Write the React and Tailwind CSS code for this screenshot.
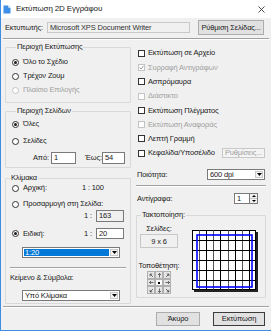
import React from 'react';

const arrowRot = [
  '-rotate-45', 'rotate-0', 'rotate-45',
  '-rotate-90', '', 'rotate-90',
  'rotate-[225deg]', 'rotate-180', 'rotate-[135deg]',
];

function Radio({ checked, disabled }) {
  return (
    <span className={`w-[7px] h-[7px] shrink-0 rounded-full border bg-white flex items-center justify-center ${disabled ? 'border-[#c4c4c4]' : 'border-[#333]'}`}>
      {checked && <span className="w-[3px] h-[3px] rounded-full bg-[#1a1a1a]" />}
    </span>
  );
}

function Check({ checked, disabled }) {
  return (
    <span className={`w-[7px] h-[7px] shrink-0 border bg-white flex items-center justify-center ${disabled ? 'border-[#c4c4c4]' : 'border-[#333]'}`}>
      {checked && (
        <svg width="5" height="5" viewBox="0 0 5 5">
          <path d="M0.5 2.5 L2 4 L4.5 0.8" fill="none" stroke={disabled ? '#9a9a9a' : '#000'} strokeWidth="1" />
        </svg>
      )}
    </span>
  );
}

function RadioRow({ label, checked, disabled, className = '' }) {
  return (
    <div className={`flex items-center gap-[4px] whitespace-nowrap ${className}`}>
      <Radio checked={checked} disabled={disabled} />
      <span className={disabled ? 'text-[#a0a0a0]' : ''}>{label}</span>
    </div>
  );
}

function CheckRow({ label, checked, disabled, children }) {
  return (
    <div className="h-[14.3px] flex items-center gap-[3px] pl-[2px] whitespace-nowrap">
      <Check checked={checked} disabled={disabled} />
      <span className={disabled ? 'text-[#a0a0a0]' : ''}>{label}</span>
      {children}
    </div>
  );
}

function Combo({ value, selected, className = '' }) {
  return (
    <div className={`h-[11px] border border-[#7a7a7a] bg-white flex ${className}`}>
      <div className={`flex-1 flex items-center ${selected ? 'bg-[#0078d7] text-white m-[1px] pl-[1px]' : 'pl-[2px]'}`}>{value}</div>
      <div className="w-[8px] my-[1px] mr-[1px] border border-[#c8c8c8] bg-[#f4f4f4] flex items-center justify-center">
        <svg width="5" height="3" viewBox="0 0 5 3"><path d="M0 0 H5 L2.5 3 Z" fill="#000" /></svg>
      </div>
    </div>
  );
}

function Field({ value, gray, className = '' }) {
  return (
    <div className={`border border-[#7a7a7a] flex items-center pl-[2px] whitespace-nowrap ${gray ? 'bg-[#f0f0f0]' : 'bg-white'} ${className}`}>{value}</div>
  );
}

function Group({ title, className = '', children }) {
  return (
    <fieldset className={`border border-[#d9d9d9] rounded-[1px] ${className}`}>
      <legend className="ml-[4px] px-[1px] leading-[10px] whitespace-nowrap">{title}</legend>
      {children}
    </fieldset>
  );
}

function Sep({ className = '' }) {
  return <div className={`border-t border-[#a0a0a0] border-b border-b-white ${className}`} />;
}

function Preview() {
  const xs = [1, 2, 3, 4, 5, 6, 7, 8].map((k) => Math.round(k * 7.1) + 0.5);
  const ys = [1, 2, 3, 4, 5].map((k) => 0.5 + k * 10);
  return (
    <svg width="66" height="62" viewBox="0 0 66 62">
      <rect x="2" y="2" width="64" height="60" fill="#222" />
      <rect x="0.5" y="0.5" width="63" height="59" fill="#fff" stroke="#000" />
      {xs.map((x, i) => (
        <line key={`v${i}`} x1={x} y1="0.5" x2={x} y2="59.5" stroke={i % 2 ? '#000' : '#555'} strokeWidth="1" />
      ))}
      {ys.map((y, i) => (
        <line key={`h${i}`} x1="0.5" y1={y} x2="63.5" y2={y} stroke="#000" strokeWidth="1" />
      ))}
      <rect x="5" y="5" width="55" height="52" fill="none" stroke="#0000ff" strokeWidth="1.6" />
    </svg>
  );
}

export default function App() {
  return (
    <div className="w-[271px] h-[331px] overflow-hidden bg-[#f0f0f0] border-l border-b border-[#3d8ee0] flex flex-col text-[7.5px] tracking-[-0.15px] leading-none text-[#1a1a1a] font-['Liberation_Sans',Arial,sans-serif]">
      {/* title bar */}
      <div className="h-[18px] shrink-0 bg-white flex items-center pl-[2px] pr-[6px]">
        <svg width="8" height="9" viewBox="0 0 8 9">
          <path d="M0.5 0.5 H5 L7.5 3 V8.5 H0.5 Z" fill="#3c8ee6" />
          <path d="M5 0.5 V3 H7.5" fill="#a9d1f7" />
        </svg>
        <span className="ml-[5px] text-[8px] text-[#222]">Εκτύπωση 2D Εγγράφου</span>
        <svg className="ml-auto" width="7" height="7" viewBox="0 0 7 7">
          <path d="M0.5 0.5 L6.5 6.5 M6.5 0.5 L0.5 6.5" stroke="#222" strokeWidth="0.8" />
        </svg>
      </div>

      {/* printer row */}
      <div className="h-[15px] mt-[2px] shrink-0 flex items-center pl-[4px]">
        <span className="w-[42px] whitespace-nowrap">Εκτυπωτής:</span>
        <Field value="Microsoft XPS Document Writer" gray className="w-[143px] h-[11px] border-[#c8c8c8] text-[#333]" />
        <button className="ml-[8px] w-[66px] h-[15px] bg-[#e1e1e1] border border-[#adadad] flex items-center justify-center whitespace-nowrap">Ρύθμιση Σελίδας...</button>
      </div>
      <Sep className="mt-[3px] mx-[2px]" />

      {/* main */}
      <div className="flex pl-[4px] gap-[5px]">
        {/* left column */}
        <div className="w-[126px] flex flex-col">
          <Group title="Περιοχή Εκτύπωσης" className="mt-[2px] h-[61px] pl-[6px]">
            <RadioRow label="Όλο το Σχέδιο" checked className="h-[14px] mt-[3px]" />
            <RadioRow label="Τρέχον Ζουμ" className="h-[14px]" />
            <RadioRow label="Πλαίσιο Επιλογής" disabled className="h-[14px]" />
          </Group>

          <Group title="Περιοχή Σελίδων" className="mt-[3px] h-[62px] pl-[6px]">
            <RadioRow label="Όλες" checked className="h-[14px] mt-[1px]" />
            <RadioRow label="Σελίδες" className="h-[14px] mt-[3px]" />
            <div className="h-[12px] mt-[4px] flex items-center">
              <span className="ml-[21px] w-[18px]">Από:</span>
              <Field value="1" className="w-[25px] h-[12px]" />
              <span className="ml-[9px] w-[17px]">Έως:</span>
              <Field value="54" className="w-[23px] h-[12px]" />
            </div>
          </Group>

          <Group title="Κλίμακα" className="mt-[5px] h-[131px]">
            <div className="h-[10px] flex items-center pl-[6px]">
              <RadioRow label="Αρχική:" className="w-[70px]" />
              <span>1 : 100</span>
            </div>
            <RadioRow label="Προσαρμογή στη Σελίδα:" className="h-[10px] mt-[6px] pl-[6px]" />
            <div className="h-[12px] mt-[1px] flex items-center justify-end pr-[6px] gap-[4px]">
              <span>1 :</span>
              <Field value="163" gray className="w-[28px] h-[12px]" />
            </div>
            <div className="h-[11px] mt-[6px] flex items-center pl-[6px] pr-[6px]">
              <RadioRow label="Ειδική:" checked />
              <span className="ml-auto mr-[4px]">1 :</span>
              <Field value="20" className="w-[28px] h-[11px]" />
            </div>
            <Combo value="1:20" selected className="mt-[8px] ml-[16px] mr-[10px]" />
            <Sep className="mt-[9px] mx-[4px]" />
            <div className="mt-[5px] pl-[4px] h-[8px] flex items-center whitespace-nowrap">Κείμενο &amp; Σύμβολα:</div>
            <Combo value="Υπό Κλίμακα" className="mt-[8px] ml-[16px] mr-[10px]" />
          </Group>
        </div>

        {/* right column */}
        <div className="w-[130px] flex flex-col pt-[6px]">
          <CheckRow label="Εκτύπωση σε Αρχείο" />
          <CheckRow label="Συρραφή Αντιγράφων" checked disabled />
          <CheckRow label="Ασπρόμαυρα" />
          <CheckRow label="Διάστικτο" disabled />
          <CheckRow label="Εκτύπωση Πλέγματος" />
          <CheckRow label="Εκτύπωση Αναφοράς" disabled />
          <CheckRow label="Λεπτή Γραμμή" />
          <CheckRow label="Κεφαλίδα/Υποσέλιδο">
            <button className="ml-auto mr-[1px] w-[43px] h-[10px] border border-[#c8c8c8] bg-[#f4f4f4] text-[#a0a0a0] flex items-center justify-center">Ρυθμίσεις...</button>
          </CheckRow>

          <div className="h-[12px] mt-[8px] flex items-center">
            <span className="pl-[1px]">Ποιότητα:</span>
            <Combo value="600 dpi" className="ml-auto mr-[1px] w-[58px]" />
          </div>
          <Sep className="mt-[5px]" />
          <div className="h-[11px] mt-[6px] flex items-center pr-[8px]">
            <span className="pl-[1px]">Αντίγραφα:</span>
            <div className="ml-auto flex h-[11px]">
              <Field value="1" className="w-[16px] h-[11px]" />
              <div className="w-[8px] flex flex-col border border-l-0 border-[#7a7a7a] bg-[#f0f0f0]">
                <div className="flex-1 flex items-center justify-center border-b border-[#c8c8c8]">
                  <svg width="4" height="2" viewBox="0 0 4 2"><path d="M0 2 H4 L2 0 Z" fill="#000" /></svg>
                </div>
                <div className="flex-1 flex items-center justify-center">
                  <svg width="4" height="2" viewBox="0 0 4 2"><path d="M0 0 H4 L2 2 Z" fill="#000" /></svg>
                </div>
              </div>
            </div>
          </div>

          <Group title="Τακτοποίηση:" className="mt-[6px] h-[88px]">
            <div className="flex">
              <div className="ml-[3px] w-[38px] flex flex-col items-center">
                <div className="h-[10px] mt-[3px] flex items-center">Σελίδες:</div>
                <div className="w-[38px] h-[14px] mt-[1px] border border-[#c8c8c8] bg-[#f0f0f0] flex items-center justify-center">9 x 6</div>
                <div className="h-[10px] mt-[12px] flex items-center whitespace-nowrap">Τοποθέτηση:</div>
                <div className="mt-[1px] grid grid-cols-3 gap-0">
                  {arrowRot.map((r, i) => (
                    <div key={i} className={`w-[8px] h-[7.5px] border border-[#b0b0b0] flex items-center justify-center ${i === 4 ? 'bg-white' : 'bg-[#e6e6e6]'}`}>
                      {i === 4 ? (
                        <span className="w-[2px] h-[2px] bg-black" />
                      ) : (
                        <svg className={r} width="5" height="5" viewBox="0 0 5 5">
                          <path d="M2.5 0.5 V4.5 M1 2 L2.5 0.5 L4 2" fill="none" stroke="#333" strokeWidth="0.7" />
                        </svg>
                      )}
                    </div>
                  ))}
                </div>
              </div>
              <div className="ml-[14px] mt-[10px]">
                <Preview />
              </div>
            </div>
          </Group>
        </div>
      </div>

      <Sep className="mt-[2px] mx-[2px]" />
      <div className="mt-[4px] flex justify-end gap-[13px] pr-[6px]">
        <button className="w-[44px] h-[14px] bg-[#e1e1e1] border border-[#adadad] flex items-center justify-center">Άκυρο</button>
        <button className="w-[52px] h-[14px] bg-[#e1e1e1] border border-[#3c3c3c] flex items-center justify-center">Εκτύπωση</button>
      </div>
    </div>
  );
}
